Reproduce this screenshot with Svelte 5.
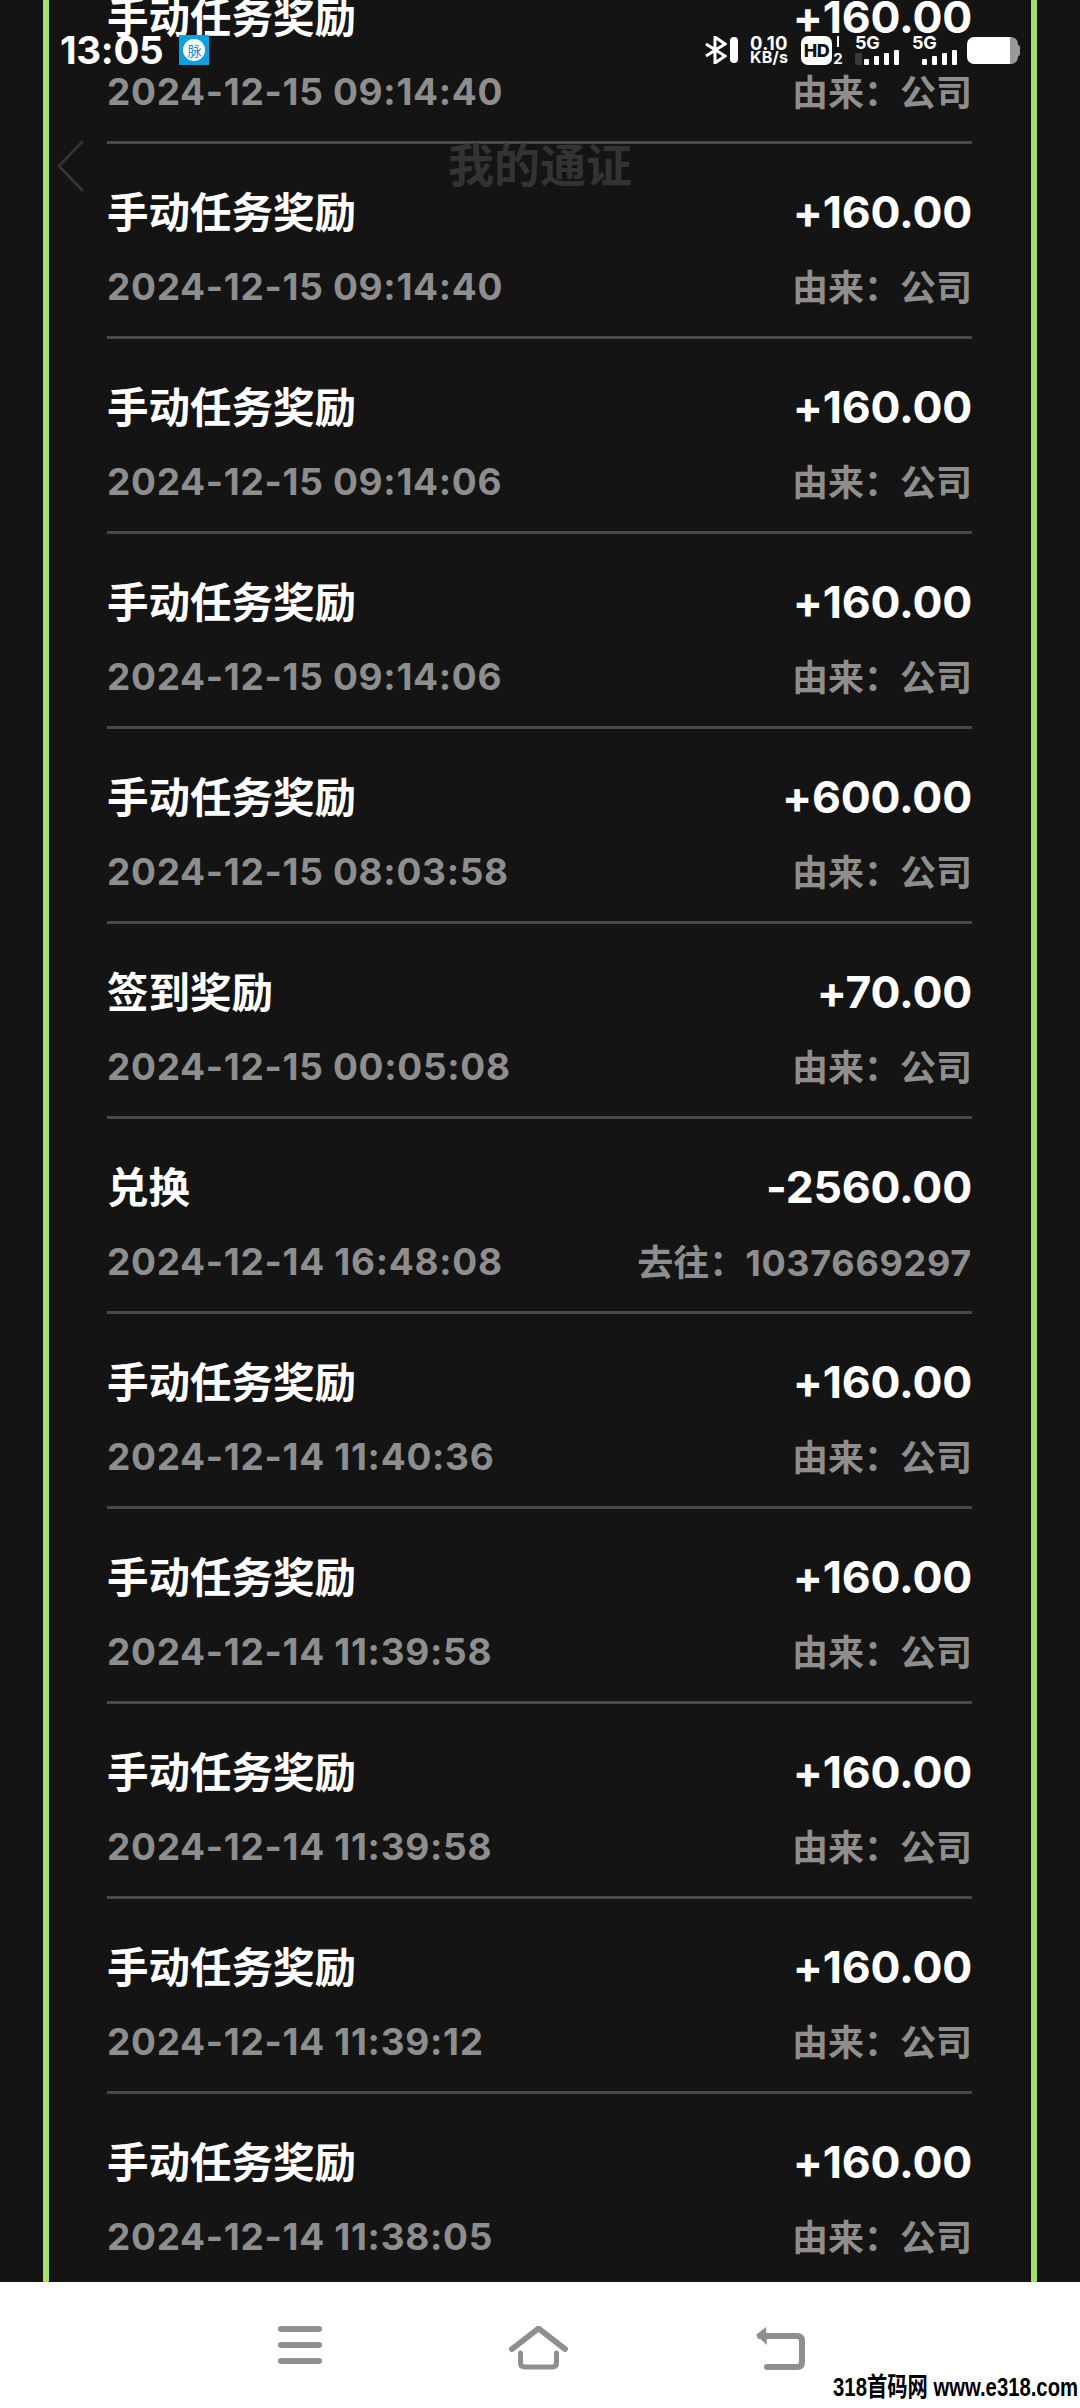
<script>
  const rows = [
    ['手动任务奖励', '+160.00', '2024-12-15 09:14:40', '由来:', '公司'],
    ['手动任务奖励', '+160.00', '2024-12-15 09:14:40', '由来:', '公司'],
    ['手动任务奖励', '+160.00', '2024-12-15 09:14:06', '由来:', '公司'],
    ['手动任务奖励', '+160.00', '2024-12-15 09:14:06', '由来:', '公司'],
    ['手动任务奖励', '+600.00', '2024-12-15 08:03:58', '由来:', '公司'],
    ['签到奖励', '+70.00', '2024-12-15 00:05:08', '由来:', '公司'],
    ['兑换', '-2560.00', '2024-12-14 16:48:08', '去往:', '1037669297'],
    ['手动任务奖励', '+160.00', '2024-12-14 11:40:36', '由来:', '公司'],
    ['手动任务奖励', '+160.00', '2024-12-14 11:39:58', '由来:', '公司'],
    ['手动任务奖励', '+160.00', '2024-12-14 11:39:58', '由来:', '公司'],
    ['手动任务奖励', '+160.00', '2024-12-14 11:39:12', '由来:', '公司'],
    ['手动任务奖励', '+160.00', '2024-12-14 11:38:05', '由来:', '公司']
  ].map((r) => [r[0], r[1], r[2], r[3].replace(':', '\uFF1A'), r[4]]);
  const isNum = (s) => /^\d+$/.test(s);
</script>

<div class="screen">
  <main class="viewport">
    <div class="frame">
      {#each rows as r}
        <div class="row">
          <div class="line top"><span class="title">{r[0]}</span><span class="amount">{r[1]}</span></div>
          <div class="line sub"><span class="date">{r[2]}</span><span class="src">{r[3]}<span class:num={isNum(r[4])}>{r[4]}</span></span></div>
        </div>
      {/each}
    </div>
  </main>

  <header class="navtitle">
    <svg class="chev" width="30" height="54" viewBox="0 0 30 54"><path d="M27 2 L3 27 L27 52" fill="none" stroke="#333" stroke-width="3"/></svg>
    <span>我的通证</span>
  </header>

  <div class="status">
    <div class="left">
      <span class="time">13:05</span>
      <span class="app"><span class="bubble">脉</span></span>
    </div>
    <div class="right">
      <svg width="22" height="28" viewBox="0 0 22 28"><path d="M1 8 L20 20 L10 27 V1 L20 8 L1 20" fill="none" stroke="#fff" stroke-width="3"/></svg>
      <span class="pill"></span>
      <span class="speed"><b>0.10</b><b class="unit">KB/s</b></span>
      <span class="hd">HD</span>
      <span class="two"><i></i><b>2</b></span>
      <span class="sig"><b>5G</b><span class="bars"><em class="arrow"></em><em style="height:6px"></em><em style="height:9px"></em><em style="height:12px"></em><em style="height:15px"></em></span></span>
      <span class="sig second"><b>5G</b><span class="bars pad"><em style="height:6px"></em><em style="height:9px"></em><em style="height:12px"></em><em style="height:15px"></em></span></span>
      <span class="batt"></span>
    </div>
  </div>

  <footer class="bottom">
    <svg width="46" height="38" viewBox="0 0 46 38"><g fill="#8f8f8f"><rect x="1" y="0" width="44" height="6" rx="3"/><rect x="1" y="16" width="44" height="6" rx="3"/><rect x="1" y="32" width="44" height="6" rx="3"/></g></svg>
    <svg width="60" height="44" viewBox="0 0 60 44"><g fill="none" stroke="#8f8f8f" stroke-linecap="round" stroke-linejoin="round"><path d="M3 23 L29.5 2.5 L56 23" stroke-width="6"/><path d="M11.5 27 V37 Q11.5 41 16 41 H43 Q47.5 41 47.5 37 V27" stroke-width="5"/></g></svg>
    <svg width="50" height="44" viewBox="0 0 50 44"><g fill="none" stroke="#8f8f8f" stroke-width="6" stroke-linecap="round" stroke-linejoin="round"><path d="M12 41 H42 Q47 41 47 36 V15 Q47 10 42 10 H5"/></g><path d="M1 9 L11 1 L12 19 Z" fill="#8f8f8f"/></svg>
  </footer>
  <div class="mark">318首码网 www.e318.com</div>
</div>

<style>
  :global(body) { margin: 0; background: #fff; }
  .screen {
    position: relative;
    width: 1080px;
    height: 2408px;
    overflow: hidden;
    display: flex;
    flex-direction: column;
    font-family: Inter, "Noto Sans CJK SC", sans-serif;
  }
  .viewport {
    height: 2282px;
    flex: none;
    overflow: hidden;
    background: #141414;
  }
  .frame {
    margin: -51px 43px 0;
    padding: 0 59px 0 58px;
    border-left: 6px solid #a6e06c;
    border-right: 6px solid #a6e06c;
    height: 2400px;
  }
  .row {
    height: 195px;
    box-sizing: border-box;
    border-bottom: 3px solid #484848;
    padding-top: 39px;
  }
  .line { display: flex; justify-content: space-between; align-items: center; }
  .top { height: 54px; }
  .sub { height: 40px; margin-top: 29px; }
  .title {
    font-family: "Noto Sans CJK SC", sans-serif;
    font-size: 41.5px;
    font-weight: 700;
    color: #fff;
  }
  .amount { font-size: 44.5px; font-weight: 700; color: #fff; letter-spacing: -0.2px; position: relative; top: 2px; }
  .date { font-size: 37px; font-weight: 700; color: #8e8e8e; letter-spacing: 0.7px; }
  .src {
    font-family: Inter, "Noto Sans CJK SC", sans-serif;
    font-size: 36px;
    font-weight: 700;
    color: #8e8e8e;
    position: relative;
    top: -1px;
  }
  .num { letter-spacing: 0.7px; }
  .navtitle {
    position: absolute;
    left: 0;
    top: 132px;
    width: 1080px;
    height: 60px;
    text-align: center;
    font-family: "Noto Sans CJK SC", sans-serif;
    font-size: 46px;
    font-weight: 700;
    line-height: 60px;
    color: #333;
  }
  .chev { position: absolute; left: 56px; top: 7px; }
  .status {
    position: absolute;
    left: 60px;
    top: 34px;
    width: 958px;
    height: 32px;
    display: flex;
    justify-content: space-between;
    align-items: center;
    color: #fff;
  }
  .left { display: flex; align-items: center; gap: 16px; }
  .time { font-size: 38.5px; font-weight: 700; line-height: 32px; letter-spacing: -0.3px; }
  .app {
    width: 30px;
    height: 30px;
    background: #0d9fe0;
    display: flex;
    align-items: center;
    justify-content: center;
  }
  .bubble {
    width: 22px;
    height: 22px;
    border-radius: 50%;
    background: #fff;
    color: #1a8fd0;
    font: 14px/22px "Noto Sans CJK SC", sans-serif;
    text-align: center;
  }
  .right { display: flex; align-items: center; height: 32px; margin-left: auto; }
  .pill { width: 8px; height: 26px; border-radius: 4px; background: #fff; margin-left: 3px; }
  .speed {
    display: flex;
    flex-direction: column;
    margin-left: 12px;
    width: 45px;
    font-size: 16px;
    line-height: 14px;
    letter-spacing: 0.2px;
  }
  .speed b:first-child { font-size: 18.5px; }
  .hd {
    margin-left: 6px;
    width: 31px;
    height: 29px;
    border-radius: 7px;
    background: #fff;
    color: #141414;
    font-size: 18px;
    font-weight: 800;
    line-height: 29px;
    text-align: center;
    letter-spacing: -0.5px;
  }
  .two { display: flex; flex-direction: column; align-items: center; width: 12px; height: 29px; justify-content: space-between; }
  .two i { width: 2px; height: 11px; background: #fff; }
  .two b { font-size: 15px; line-height: 12px; }
  .sig { display: flex; flex-direction: column; align-items: flex-start; margin-left: 11px; width: 44px; height: 29px; justify-content: space-between; }
  .sig.second { margin-left: 13px; width: 45px; }
  .sig b { font-size: 18px; line-height: 13px; letter-spacing: -0.3px; }
  .bars { display: flex; align-items: flex-end; gap: 5px; height: 15px; }
  .bars.pad { padding-left: 10px; }
  .bars em { width: 5px; background: #fff; border-radius: 1px; }
  .bars em.arrow { width: 7px; height: 12px; background: #3a3a3a; margin-right: -3px; }
  .batt {
    position: relative;
    margin-left: 10px;
    width: 51px;
    height: 27px;
    border-radius: 7px;
    background: linear-gradient(to right, #fff 84%, #999 84%);
  }
  .batt::after {
    content: "";
    position: absolute;
    left: 51px;
    top: 8px;
    width: 2px;
    height: 11px;
    background: #999;
    border-radius: 0 2px 2px 0;
  }
  .bottom {
    flex: none;
    height: 126px;
    background: #fff;
    display: flex;
    align-items: flex-start;
    padding-top: 44px;
    box-sizing: border-box;
    justify-content: space-between;
    padding-left: 277px;
    padding-right: 275px;
  }
  .mark {
    position: absolute;
    right: 2px;
    bottom: 8px;
    color: #000;
    font-family: "Liberation Sans", "Noto Sans CJK SC", sans-serif;
    font-size: 26px;
    font-weight: 700;
    line-height: 26px;
    white-space: nowrap;
    transform: scaleX(0.78);
    transform-origin: right center;
  }
</style>
